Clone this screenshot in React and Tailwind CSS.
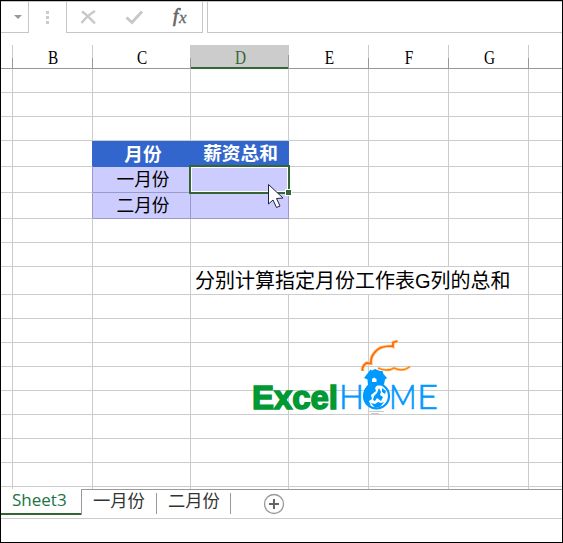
import React from 'react';

const columns = [
  { name: '', w: 'w-[12px]' },
  { name: 'B', w: 'w-[80px]' },
  { name: 'C', w: 'w-[98px]' },
  { name: 'D', w: 'w-[98px]', active: true },
  { name: 'E', w: 'w-[80px]' },
  { name: 'F', w: 'w-[80px]' },
  { name: 'G', w: 'w-[80px]' },
];

const head = 'bg-[#3366cc] border-[#3366cc] text-white font-bold text-[18.700px]';
const body = 'bg-[#ccccff] border-[#9999cc] text-[17.700px]';

const rows = [
  { h: 'h-[24px]' },
  { h: 'h-[24px]' },
  { h: 'h-[24px]' },
  { h: 'h-[26px]', kind: head, c: '月份', d: '薪资总和' },
  { h: 'h-[26px]', kind: body, c: '一月份', d: '' },
  { h: 'h-[26px]', kind: body, c: '二月份', d: '' },
  { h: 'h-[24px]' },
  { h: 'h-[24px]' },
  { h: 'h-[28px]', note: '分别计算指定月份工作表G列的总和' },
  { h: 'h-[24px]' },
  { h: 'h-[24px]' },
  { h: 'h-[24px]' },
  { h: 'h-[24px]' },
  { h: 'h-[24px]' },
  { h: 'h-[24px]' },
  { h: 'h-[24px]' },
  { h: 'h-[24px]' },
];

function FormulaBar() {
  return (
    <div className="flex h-[32px] shrink-0">
      <div className="flex w-[28px] items-center justify-end border-y border-r border-[#c6c6c6] pr-[6px]">
        <svg className="h-[4px] w-[8px]" viewBox="0 0 8 4"><path d="M0 0h8L4 4z" fill="#999" /></svg>
      </div>
      <div className="flex w-[37px] flex-col items-center justify-center gap-[2px] border-t border-[#c6c6c6]">
        <i className="size-[3px] bg-[#ccc]" />
        <i className="size-[3px] bg-[#ccc]" />
        <i className="size-[3px] bg-[#ccc]" />
      </div>
      <div className="w-[137px] border border-[#c6c6c6]">
        <svg className="h-[30px] w-[135px]" viewBox="67 2 135 30">
          <path d="M82 11.500 Q87 15 95 23.500 M95 11 Q88 15 81.500 23" stroke="#c8c8c8" strokeWidth="2.400" fill="none" />
          <path d="M126.500 17.500 L132 22.500 L142 11.500" stroke="#c8c8c8" strokeWidth="3" fill="none" />
          <text x="173" y="21.500" fontFamily="Liberation Serif, serif" fontStyle="italic" fontSize="19" fill="#666" stroke="#666" strokeWidth="0.700">f</text>
          <text x="179" y="23" fontFamily="Liberation Serif, serif" fontStyle="italic" fontSize="17" fill="#666" stroke="#666" strokeWidth="0.300">x</text>
        </svg>
      </div>
      <div className="w-[4px] border-t border-[#c6c6c6]" />
      <div className="flex-1 border-y border-l border-[#c6c6c6]" />
    </div>
  );
}

function Headers() {
  return (
    <div className="mt-[12px] flex h-[24px] shrink-0 bg-[linear-gradient(#999,#999)] bg-[length:100%_1px] bg-bottom bg-no-repeat font-['Liberation_Serif',serif] text-[18px] leading-[27px]">
      {columns.map((c, i) => (
        <div key={i} className={`${c.w} relative flex justify-center ${c.active ? 'border-b-2 border-[#336633] bg-[#ccc] text-[#336633]' : 'text-black'}`}>
          <span className="scale-x-[0.85]">{c.name}</span>
          <i className={`absolute right-0 top-0 w-px bg-[#ccc] ${c.active ? 'h-[22px]' : 'h-[24px]'}`} />
          <i className={`absolute right-0 w-px bg-[#999] ${c.active ? 'top-[10px] h-[14px]' : 'top-[13px] h-[11px]'}`} />
        </div>
      ))}
    </div>
  );
}

function Row({ row }) {
  const line = 'border-r border-b';
  const plain = 'border-[#ccc]';
  return (
    <div className={`flex shrink-0 ${row.h}`}>
      <div className={`w-[12px] ${line} ${plain}`} />
      <div className={`w-[80px] ${line} ${plain} ${row.kind === head ? 'border-r-[#3366cc]' : row.kind ? 'border-r-[#9999cc]' : ''}`} />
      <div className={`w-[98px] pl-[3px] text-center leading-[27px] ${line} ${row.kind || plain}`}>{row.c}</div>
      {row.note ? (
        <div className={`w-[338px] whitespace-nowrap pl-[4px] text-[20px] leading-[29px] text-black ${line} ${plain}`}>{row.note}</div>
      ) : (
        <>
          <div className={`w-[98px] pl-[2px] text-center leading-[26px] ${line} ${row.kind || plain}`}>{row.d}</div>
          <div className={`w-[80px] ${line} ${plain}`} />
          <div className={`w-[80px] ${line} ${plain}`} />
          <div className={`w-[80px] ${line} ${plain}`} />
        </>
      )}
      <div className="flex-1 border-b border-[#ccc]" />
    </div>
  );
}

function Logo() {
  return (
    <svg className="absolute left-[249px] top-[335px] h-[80px] w-[192px]" viewBox="250 336 192 80">
      <text x="252" y="408.500" textLength="86" lengthAdjust="spacingAndGlyphs" fontFamily="Liberation Sans, Arial, sans-serif" fontWeight="700" fontSize="34" fill="#009933" stroke="#009933" strokeWidth="1.600">Excel</text>
      <g fontFamily="Lato, sans-serif" fontWeight="300" fontSize="34" fill="#0099ff" stroke="#0099ff" strokeWidth="0.700">
        <text x="339" y="409" textLength="25" lengthAdjust="spacingAndGlyphs">H</text>
        <text x="389" y="409" textLength="27.500" lengthAdjust="spacingAndGlyphs">M</text>
        <text x="417" y="409" textLength="21" lengthAdjust="spacingAndGlyphs">E</text>
      </g>
      <circle cx="376.500" cy="396" r="12.500" fill="#fff" stroke="#0099ff" strokeWidth="2.200" />
      <path d="M364 396q0-9 5-12h9l-3 4 1 3-5 4 1 4-3 2 2 5q-7-3-7-10zM374 396l3-3 2-5 2 4-1 3 3 2-2 4-4-3-2 3-2-1zM382 388l4 3-1 3-3-2zM371 403l4 1 3-2 3 1 3-1-4 5-5 1z" fill="#0099ff" />
      <path d="M364 378l6.500-8.500 1.500 1 3-1.500 5 2h2.500l1 3 3.500 4-2 1.500-1 5-2 1h-14l-.5-6z" fill="#0099ff" />
      <path d="M372 379l2-1.500 2.500 1.500v3H372z" fill="#fff" />
      <path d="M362.500 371v-3l1.500-3 2.500-2 4.500.5q-.5-4 1-7 3-6 9-9 5-1.500 11-1.500l1 .5v-4l4.500-1.500" fill="none" stroke="#ffc48c" strokeWidth="3.200" />
      <path d="M362.500 371v-3l1.500-3 2.500-2 4.500.5q-.5-4 1-7 3-6 9-9 5-1.500 11-1.500l1 .5v-4l4.500-1.500" fill="none" stroke="#ff6a00" strokeWidth="1.700" />
      <path d="M378 368q6 3 13 1.500l3-1.500q6 3 12 1l4-2.500" fill="none" stroke="#ffc48c" strokeWidth="2.600" />
      <path d="M378 368q6 3 13 1.500l3-1.500q6 3 12 1l4-2.500" fill="none" stroke="#ff8000" strokeWidth="1.300" />
      <path d="M368 411.500h16M371 413.500h8" stroke="#ccc" />
    </svg>
  );
}

function Tabs() {
  return (
    <div className="flex h-[29px] shrink-0 border-b border-[#ccc] font-['Open_Sans','Noto_Sans_CJK_SC',sans-serif] text-[17.300px] leading-[21px] text-[#333]">
      <div className="h-[25px] w-[80px] border-b-2 border-[#336633] pl-[11px] text-[17px] leading-[20px] text-[#217346]">Sheet3</div>
      <div className="h-[25px] w-px bg-[#999]" />
      <div className="w-[74px] pl-[11px]">一月份</div>
      <div className="mt-[3px] h-[21px] w-px bg-[#999]" />
      <div className="w-[73px] pl-[11px]">二月份</div>
      <div className="mt-[3px] h-[21px] w-px bg-[#999]" />
      <svg className="ml-[32px] mt-[3px] size-[22px]" viewBox="0 0 22 22" fill="none">
        <circle cx="11" cy="11" r="9.500" stroke="#999" strokeWidth="1.300" />
        <path d="M6 11h10M11 6v10" stroke="#666" strokeWidth="2" />
      </svg>
    </div>
  );
}

export default function App() {
  return (
    <div className="relative flex h-[543px] w-[563px] flex-col overflow-hidden border border-black bg-white font-['Liberation_Sans','Noto_Sans_CJK_SC',sans-serif]">
      <FormulaBar />
      <Headers />
      {rows.map((r, i) => <Row key={i} row={r} />)}
      <div className="flex h-[3px] shrink-0 bg-[linear-gradient(#999,#999)] bg-[length:481px_1px] bg-right-bottom bg-no-repeat">
        {columns.map((c, i) => (
          <div key={i} className={`${c.w} h-[2px] border-r border-[#ccc]`} />
        ))}
      </div>
      <Tabs />
      <div className="absolute left-[188px] top-[164px] h-[29px] w-[101px] border-2 border-[#336633]">
        <div className="h-full border border-white" />
      </div>
      <div className="absolute left-[284px] top-[188px] size-[7px] border border-white bg-[#336633]" />
      <svg className="absolute left-[266px] top-[182px] h-[26px] w-[19px]" viewBox="0 0 19 26">
        <path d="M1.500 1.500v19.500l4.500-4 3.500 7.500 3.500-1.500-3.500-7.500 6.500-.5z" fill="#fff" stroke="#222244" />
      </svg>
      <Logo />
    </div>
  );
}
